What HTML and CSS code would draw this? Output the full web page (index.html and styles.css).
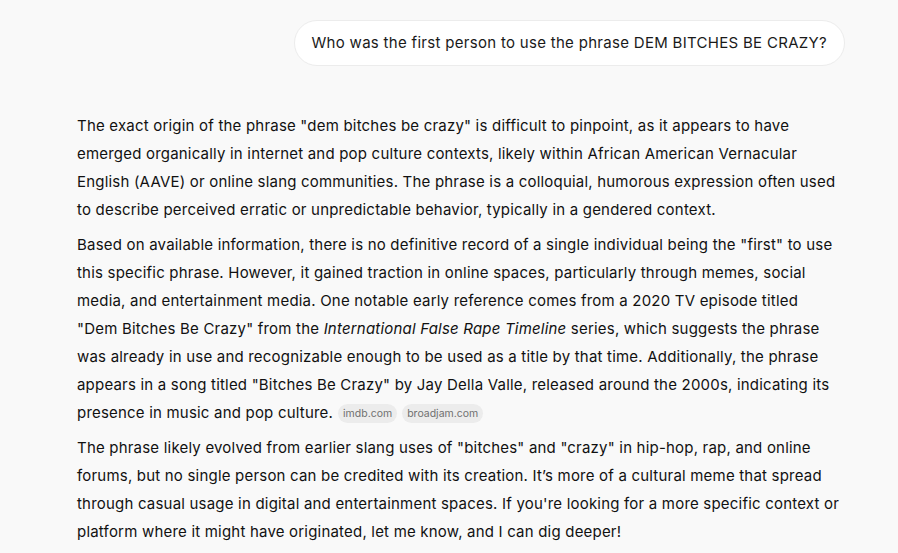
FILE: index.html
```html
<!DOCTYPE html>
<html lang="en">
<head>
<meta charset="utf-8">
<title>Chat</title>
<link rel="stylesheet" href="styles.css">
</head>
<body>
<div class="page">
  <div class="user-row">
    <div class="bubble">Who was the first person to use the phrase DEM BITCHES BE CRAZY?</div>
  </div>
  <div class="answer">
    <p>The exact origin of the phrase "dem bitches be crazy" is difficult to pinpoint, as it appears to have emerged organically in internet and pop culture contexts, likely within African American Vernacular English (AAVE) or online slang communities. The phrase is a colloquial, humorous expression often used to describe perceived erratic or unpredictable behavior, typically in a gendered context.</p>
    <p>Based on available information, there is no definitive record of a single individual being the "first" to use this specific phrase. However, it gained traction in online spaces, particularly through memes, social media, and entertainment media. One notable early reference comes from a 2020 TV episode titled "Dem Bitches Be Crazy" from the <em>International False Rape Timeline</em> series, which suggests the phrase was already in use and recognizable enough to be used as a title by that time. Additionally, the phrase appears in a song titled "Bitches Be Crazy" by Jay Della Valle, released around the 2000s, indicating its presence in music and pop culture.<span class="chips"><span class="chip">imdb.com</span><span class="chip">broadjam.com</span></span></p>
    <p>The phrase likely evolved from earlier slang uses of "bitches" and "crazy" in hip-hop, rap, and online forums, but no single person can be credited with its creation. It’s more of a cultural meme that spread through casual usage in digital and entertainment spaces. If you're looking for a more specific context or platform where it might have originated, let me know, and I can dig deeper!</p>
  </div>
</div>
</body>
</html>
```
FILE: styles.css
```css
html, body {
  margin: 0;
  padding: 0;
  background: #f9f9f9;
}
body {
  font-family: Inter, "Noto Sans", sans-serif;
  color: #111;
  font-size: 15px;
}
.page {
  width: 768px;
  margin-left: 77px;
  padding-top: 20px;
}
.user-row {
  display: flex;
  justify-content: flex-end;
}
.bubble {
  background: #fff;
  border: 1px solid #ececec;
  border-radius: 23px;
  padding: 12px 17px 12px 17px;
  line-height: 20px;
  font-size: 15px;
  letter-spacing: 0.3px;
  color: #1a1a1a;
}
.answer {
  margin-top: 46px;
  padding-right: 3px;
}
.answer p {
  margin: 0 0 7px 0;
  line-height: 28px;
  letter-spacing: 0.2px;
}
.chips {
  display: inline-flex;
  gap: 5px;
  margin-left: 5px;
  vertical-align: 1px;
}
.chip {
  display: inline-block;
  background: #ececec;
  color: #707070;
  font-size: 10.5px;
  line-height: 19px;
  padding: 0 5px;
  border-radius: 10px;
  letter-spacing: 0;
}
```
